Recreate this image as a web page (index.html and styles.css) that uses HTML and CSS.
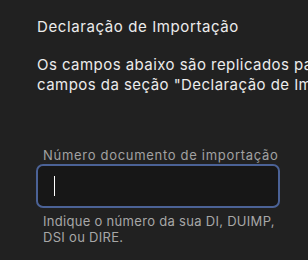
FILE: index.html
```html
<!DOCTYPE html>
<html lang="pt-BR">
<head>
    <meta charset="UTF-8">
    <meta name="viewport" content="width=device-width, initial-scale=1.0">
    <title>Declaração de Importação</title>
    <link rel="stylesheet" href="styles.css">
</head>
<body>
    <div class="panel">
        <h2 class="section-title">Declaração de Importação</h2>
        <p class="section-desc">Os campos abaixo são replicados para os campos da seção "Declaração de Importação".</p>

        <div class="field">
            <label class="field-label" for="docNumber">Número documento de importação</label>
            <div class="field-input">
                <span class="caret"></span>
                <input type="text" id="docNumber">
            </div>
            <p class="field-help">Indique o número da sua DI, DUIMP, DSI ou DIRE.</p>
        </div>
    </div>
</body>
</html>
```

FILE: styles.css
```css
body {
    margin: 0;
    background-color: #212121;
    font-family: 'Inter', 'Noto Sans', sans-serif;
    overflow: hidden;
}

.panel {
    width: 300px;
    padding: 17px 37px;
}

.section-title {
    margin: 0;
    font-size: 15px;
    font-weight: 400;
    line-height: 20px;
    letter-spacing: 0.6px;
    color: #ececec;
}

.section-desc {
    width: 370px;
    margin: 18px 0 0;
    font-size: 15px;
    line-height: 20px;
    letter-spacing: 0.45px;
    color: #ececec;
}

.field {
    width: 244px;
    margin-top: 52px;
    margin-left: -1px;
}

.field-label {
    display: block;
    padding-left: 7px;
    font-size: 13px;
    line-height: 16px;
    letter-spacing: 0.7px;
    color: #a2a2a2;
    margin-bottom: 1px;
}

.field-input {
    display: flex;
    align-items: center;
    height: 40px;
    border: 2px solid #4b6296;
    border-radius: 7px;
    background: #171717;
    padding: 0 16px;
}

.caret {
    width: 1px;
    height: 20px;
    background: #ffffff;
}

.field-input input {
    flex: 1;
    min-width: 0;
    border: none;
    outline: none;
    background: transparent;
    color: #ececec;
    font: inherit;
}

.field-help {
    margin: 5px -8px 0 0;
    padding-left: 7px;
    font-size: 13px;
    line-height: 16px;
    letter-spacing: 0.3px;
    color: #a7a7a7;
}
```
